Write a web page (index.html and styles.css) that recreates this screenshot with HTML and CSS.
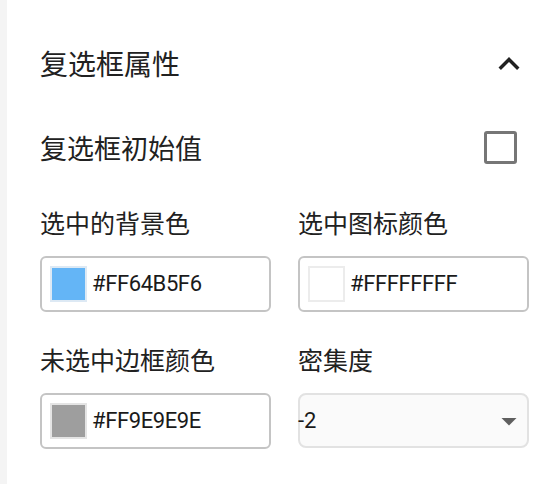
FILE: index.html
```html
<!DOCTYPE html>
<html lang="zh">
<head>
<meta charset="utf-8">
<link rel="stylesheet" href="styles.css">
</head>
<body>
<div class="page">
  <div class="strip"></div>
  <div class="panel">
    <div class="header">
      <div class="title">复选框属性</div>
      <svg class="chevron" viewBox="0 0 24 24" width="42" height="42"><path d="M12 8l-6 6 1.41 1.41L12 10.83l4.59 4.58L18 14z" fill="#212121"/></svg>
    </div>
    <div class="check-row">
      <div class="check-label">复选框初始值</div>
      <div class="checkbox"></div>
    </div>
    <div class="grid">
      <div class="field">
        <div class="label">选中的背景色</div>
        <div class="input">
          <div class="swatch swatch-blue"></div>
          <span class="hex">#FF64B5F6</span>
        </div>
      </div>
      <div class="field">
        <div class="label">选中图标颜色</div>
        <div class="input">
          <div class="swatch swatch-white"></div>
          <span class="hex">#FFFFFFFF</span>
        </div>
      </div>
      <div class="field">
        <div class="label">未选中边框颜色</div>
        <div class="input">
          <div class="swatch swatch-grey"></div>
          <span class="hex">#FF9E9E9E</span>
        </div>
      </div>
      <div class="field">
        <div class="label">密集度</div>
        <div class="select">
          <span class="select-value">-2</span>
          <svg class="arrow" viewBox="0 0 24 24" width="36" height="36"><path d="M7 10l5 5 5-5z" fill="#5f5f5f"/></svg>
        </div>
      </div>
    </div>
  </div>
</div>
</body>
</html>
```
FILE: styles.css
```css
html, body {
  margin: 0;
  padding: 0;
  background: #ffffff;
}
body {
  font-family: "Noto Sans CJK SC", "Noto Sans", sans-serif;
  color: #212121;
}
.page {
  display: flex;
  width: 560px;
  height: 484px;
  overflow: hidden;
}
.strip {
  width: 7px;
  flex: none;
  background: #f4f4f4;
}
.panel {
  flex: 1;
  padding: 40px 31px 0 33px;
}
.header {
  height: 47px;
  display: flex;
  align-items: center;
  justify-content: space-between;
}
.title {
  font-size: 28px;
  line-height: 47px;
}
.chevron {
  display: block;
  margin-right: -1px;
}
.check-row {
  margin-top: 34px;
  height: 53px;
  display: flex;
  align-items: center;
  justify-content: space-between;
}
.check-label {
  font-size: 27px;
  line-height: 53px;
}
.checkbox {
  width: 33px;
  height: 33px;
  box-sizing: border-box;
  border: 3px solid #767676;
  border-radius: 3px;
  margin-right: 12px;
}
.grid {
  margin-top: 33px;
  display: grid;
  grid-template-columns: 231px 231px;
  column-gap: 27px;
  row-gap: 32px;
}
.field {
  display: flex;
  flex-direction: column;
  gap: 19px;
}
.label {
  font-size: 25px;
  line-height: 30px;
}
.input {
  height: 56px;
  box-sizing: border-box;
  border: 2px solid #c4c4c4;
  border-radius: 6px;
  padding: 0 8px;
  display: flex;
  align-items: center;
  gap: 5px;
}
.swatch {
  width: 37px;
  height: 36px;
  box-sizing: border-box;
  border: 2px solid #e4e8ec;
  flex: none;
}
.swatch-blue { background: #64b5f6; border-color: #dde9f4; }
.swatch-white { background: #ffffff; border-color: #ececec; }
.swatch-grey { background: #9e9e9e; border-color: #e4e4e4; }
.hex {
  font-family: Roboto, "Noto Sans", sans-serif;
  font-size: 22px;
  letter-spacing: -0.4px;
  line-height: 30px;
  color: #1a1a1a;
}
.select {
  height: 55px;
  box-sizing: border-box;
  border: 2px solid #e2e2e2;
  border-radius: 8px;
  background: #fafafa;
  display: flex;
  align-items: center;
  justify-content: space-between;
  padding-right: 0;
}
.select-value {
  font-family: Roboto, "Noto Sans", sans-serif;
  font-size: 22px;
  line-height: 30px;
  margin-left: -2px;
  color: #1a1a1a;
}
.arrow {
  display: block;
}
```
